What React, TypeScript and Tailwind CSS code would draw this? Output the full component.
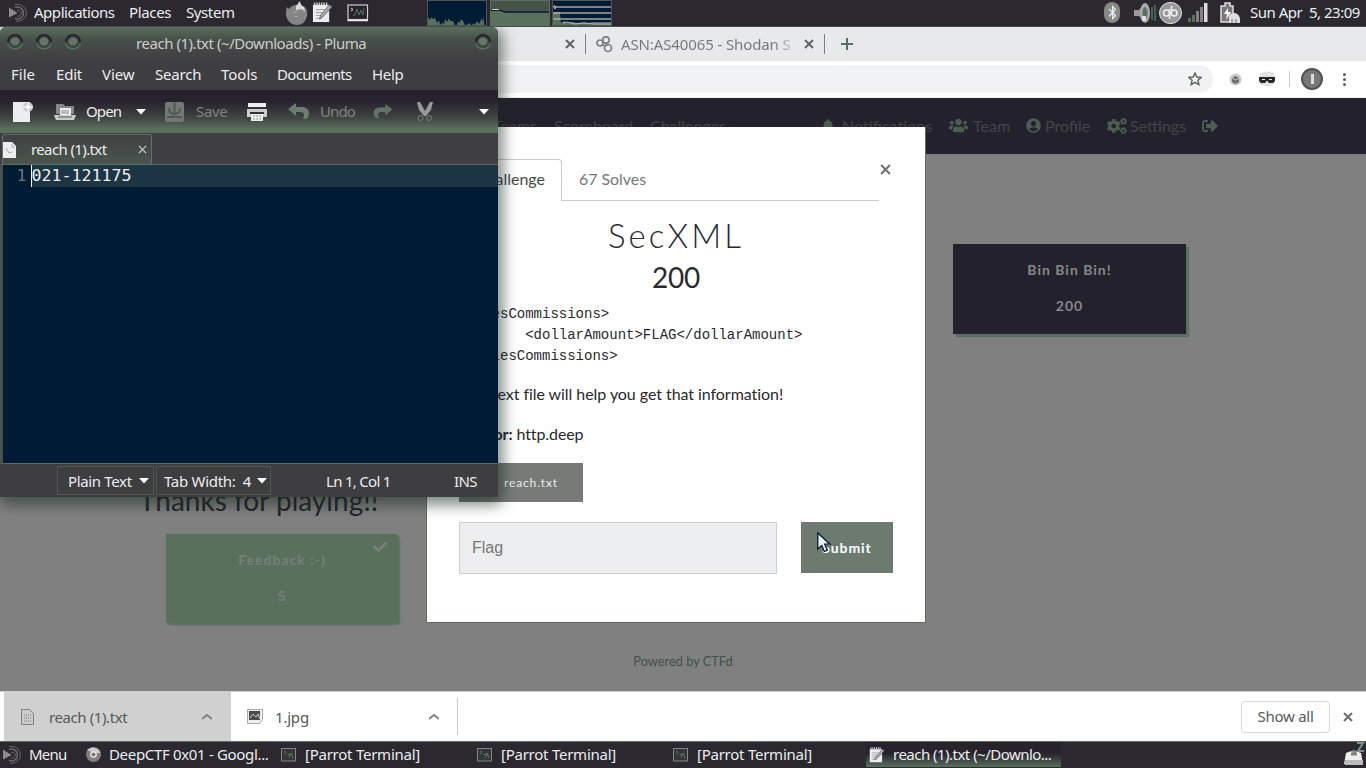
import React from "react";
import { FaBell, FaUsers, FaUserCircle, FaCogs, FaSignOutAlt, FaCheck, FaDownload, FaBluetoothB } from "react-icons/fa";

const ui = "font-['Noto_Sans',sans-serif]";

function ParrotLogo() {
  return (
    <svg width="20" height="20" viewBox="0 0 20 20" className="shrink-0">
      <path d="M1 4.5 9.5 10 1 14.5z" fill="#8c8c8c" />
      <path d="M7 4.5A6 6 0 1 1 7 15.5" fill="none" stroke="#777" strokeWidth="1.2" />
      <path d="M7 1.5A9 9 0 0 1 18 13Q15 18 8 18.5" fill="none" stroke="#666" strokeWidth="1" />
      <path d="M9 7.5A3 3 0 1 1 9 13" fill="none" stroke="#666" strokeWidth="1" />
    </svg>
  );
}

function Terminal({ dim = false }: { dim?: boolean }) {
  return dim ? (
    <svg width="15" height="14" viewBox="0 0 15 14" className="shrink-0">
      <rect x=".5" y=".5" width="14" height="12.5" fill="#333735" stroke="#858585" />
      <path d="M3 3l2 1.5L3 6M6.500 6.500h2M8 10l2-5 2 5" fill="none" stroke="#667568" />
    </svg>
  ) : (
    <svg width="22" height="18" viewBox="0 0 22 18" className="shrink-0">
      <rect x="1" y="1" width="19.500" height="14.500" fill="#27222c" stroke="#cdcdcd" strokeWidth="1.2" />
      <path d="M.5 16.500h20.500" stroke="#eee" strokeWidth="1.500" />
      <path d="M4 4l2 1.500L4 7" fill="none" stroke="#ddd" />
      <path d="M6 12l2-1 2-6 2 6 2-5 2 5 1-7" fill="none" stroke="#58705c" />
    </svg>
  );
}

function Notepad({ size }: { size: number }) {
  return (
    <svg width={size} height={size} viewBox="0 0 22 22" className="shrink-0">
      <path d="M1 3h17v18H1z" fill="#ecedef" />
      <path d="M2 2h15" stroke="#ccc" strokeWidth="3" strokeDasharray="1.500 1" />
      <path d="M4 8h9M4 11h7M4 14h6M4 17h5" stroke="#999" />
      <path d="M8 18l1-4L18 3l3 2-10 11z" fill="#aaa" stroke="#555" strokeWidth=".8" />
    </svg>
  );
}

function Firefox() {
  return (
    <svg width="24" height="24" viewBox="0 0 24 24">
      <path d="M2 6l2 2q3-4 7-4 2-1 3-4l3 5 3 1q3 4 2 9-2 9-10 9T1 15q-.5-5 1-9z" fill="#858585" />
      <path d="M11 5q3-2 4-5 0 4 4 6l1 5-3-3-6 1z" fill="#ddd" />
      <path d="M8 12l4-2M9 15l4 1" stroke="#aaa" />
    </svg>
  );
}

function Graph1() {
  return (
    <svg width="60" height="26" viewBox="0 0 60 26">
      <rect width="60" height="26" fill="#001b35" />
      <path d="M0 26V19l1-2 2 3 1-3 2 2 2-1 2 5 2-3 1 5 2-2 2 1 1-5 2 3 2-4 1 3 3 0 2 5 2-1 1-4 2 2 1-4 2 2 2 5 3-2 2-1 1 3 3-3 1 2 2-4 2 3 1-2 2-4 1 4 1-6v11z" fill="#58705c" />
      <rect x=".5" y=".5" width="59" height="25" fill="none" stroke="#4c5650" />
    </svg>
  );
}
function Graph2() {
  return (
    <svg width="60" height="26" viewBox="0 0 60 26">
      <rect width="60" height="26" fill="#48534b" />
      <path d="M0 26V11h9l7 1h44v14z" fill="#58705c" />
      <path d="M0 10h9l6 2h45" fill="none" stroke="#001b35" strokeWidth="1.300" />
      <path d="M2 9.500h7" stroke="#ccc" />
      <rect x=".5" y=".5" width="59" height="25" fill="none" stroke="#58705c" />
    </svg>
  );
}
function Graph3() {
  return (
    <svg width="60" height="26" viewBox="0 0 60 26">
      <rect width="60" height="26" fill="#001b35" />
      <path d="M1 25V13l4-1 3 2 1 9 3-2 3 2 6-1 5 1 6-1 4 1 5-1h18v3z" fill="#58705c" />
      <path d="M1 7h58M1 13h58M1 19h58" stroke="#808080" strokeWidth="2" />
      <path d="M2 5l2 3-2 1M2 13h6M2 19h6M11 23l4-1 8 2 9-1 10 1h17" fill="none" stroke="#bbb" />
      <rect x=".5" y=".5" width="59" height="25" fill="none" stroke="#4c5650" />
    </svg>
  );
}

function TopPanel() {
  return (
    <header className={`flex h-[27px] shrink-0 items-center overflow-hidden border-b border-[#4c4a50] bg-[#2b2830] pb-px text-[15px] text-[#ecedef] ${ui}`}>
      <div className="w-[34px] shrink-0 pl-2"><ParrotLogo /></div>
      <div className="w-[95px] shrink-0 whitespace-nowrap tracking-[-0.47px]">Applications</div>
      <div className="w-[57px] shrink-0 whitespace-nowrap tracking-[-0.35px]">Places</div>
      <div className="w-[99px] shrink-0 whitespace-nowrap tracking-[-0.4px]">System</div>
      <div className="w-[27px] shrink-0"><Firefox /></div>
      <div className="w-[35px] shrink-0"><Notepad size={21} /></div>
      <div className="w-[80px] shrink-0"><Terminal /></div>
      <div className="flex w-[185px] shrink-0 gap-[2.5px] self-start"><Graph1 /><Graph2 /><Graph3 /></div>
      <div className="flex flex-1 items-center justify-end pr-[4px]">
        <span className="flex h-[21px] w-[16px] items-center justify-center rounded-full bg-[#858985]"><FaBluetoothB size={15} /></span>
        <svg width="24" height="22" viewBox="0 0 24 22" className="ml-[13px]">
          <path d="M1 8h5l5-6v18l-5-6H1z" fill="#999" />
          <ellipse cx="12" cy="11" rx="5" ry="10" fill="#aaa" /><ellipse cx="12" cy="11" rx="2.500" ry="6" fill="#58705c" />
          <path d="M9 14h4v5h-4z" fill="#ddd" /><path d="M19 5v13M22 3v16" stroke="#58705c" strokeWidth="1.500" />
        </svg>
        <span className="ml-[2px] flex h-[22px] w-[23px] items-center justify-center rounded-full border border-[#ddd] bg-[#999]">
          <svg width="19" height="16" viewBox="0 0 19 16" fill="none" stroke="#eee" strokeWidth="1.500"><circle cx="5.500" cy="8" r="3" /><circle cx="13" cy="8" r="3" /><path d="M8.500 4v10M10.500 1v10" /></svg>
        </span>
        <svg width="21" height="21" viewBox="0 0 21 21" className="ml-[5px]">
          <path d="M1 16h3v4H1zM5 13h3v7H5z" fill="#58705c" /><path d="M9 9h3v11H9zM13 5h3v15h-3z" fill="#808080" /><path d="M17 1h3.500v19H17z" fill="#ddd" />
        </svg>
        <svg width="22" height="22" viewBox="0 0 22 22" className="ml-[11px]">
          <path d="M2 4h4V1h5v3h3v16H2z" fill="#777" stroke="#ddd" strokeWidth="1.500" />
          <path d="M9 6l-4 6h3l-1 6 5-8H9z" fill="#fff" />
          <path d="M10 21v-7q1-3 5-3t6 5v5z" fill="#ddd" /><path d="M13 21v-4M17 21v-4" stroke="#777" />
        </svg>
        <span className="ml-[9px] w-[112px] whitespace-pre tracking-[-0.5px]">Sun Apr  5, 23:09</span>
      </div>
    </header>
  );
}

function Cross({ className = "", size = 10, w = 2 }: { className?: string; size?: number; w?: number }) {
  return (
    <svg width={size} height={size} viewBox="0 0 10 10" className={`shrink-0 ${className}`} stroke="currentColor" strokeWidth={w} fill="none">
      <path d="M1 1l8 8M9 1l-8 8" />
    </svg>
  );
}

function Chrome() {
  return (
    <>
      <div className={`flex h-[34px] shrink-0 items-center bg-[#e8e9eb] pl-[565px] text-[16px] text-[#747874] ${ui}`}>
        <Cross className="text-[#606461]" />
        <div className="ml-[10px] h-[20px] w-px bg-[#808080]" />
        <svg width="18" height="17" viewBox="0 0 18 17" className="ml-[10px]" fill="none" stroke="#808080" strokeWidth="1.700">
          <circle cx="4" cy="7" r="3" /><circle cx="10" cy="4" r="3.200" /><circle cx="12" cy="12" r="3.500" /><path d="M6 9l4 1M10 7l1 3" />
        </svg>
        <div className="ml-[7px] w-[183px] overflow-hidden whitespace-nowrap bg-gradient-to-r from-[#747874] from-[84%] to-[#e8e9eb] to-[97%] bg-clip-text text-[15px] tracking-[-0.12px] text-transparent">ASN:AS40065 - Shodan S</div>
        <Cross className="text-[#606461]" />
        <div className="ml-[10px] h-[20px] w-px bg-[#808080]" />
        <svg width="12" height="12" viewBox="0 0 12 12" className="ml-[16px]"><path d="M6 0v12M0 6h12" stroke="#58705c" strokeWidth="2" /></svg>
      </div>
      <div className="flex h-[36px] shrink-0 items-center bg-white">
        <div className="flex h-[28px] w-[1213px] items-center justify-end rounded-r-full bg-[#f1f2f3] pr-[11px]">
          <svg width="14" height="14" viewBox="0 0 14 14"><path d="M7 1l1.800 4 4.400.4-3.300 2.900 1 4.300L7 10.300l-3.900 2.300 1-4.300L.8 5.400l4.400-.4z" fill="none" stroke="#58625b" strokeWidth="1.400" /></svg>
        </div>
        <svg width="13" height="13" viewBox="0 0 13 13" className="ml-[16px]"><circle cx="6.500" cy="6.500" r="6" fill="#ccc" /><path d="M3 5l3.500-2L10 5v4l-3.500 2L3 9z" fill="#667069" /><path d="M3 5l3.500 2L10 5" fill="none" stroke="#ccc" /></svg>
        <svg width="16" height="16" viewBox="0 0 16 16" className="ml-[17px]"><path d="M1 2q7-3 14 0v11q-7 5-14 0z" fill="#e2e2e2" /><path d="M0 6h16v4l-2 2h-4L8 9.500 6 12H2l-2-2z" fill="#27222c" /><path d="M3 8.500h3M10 8.500h3" stroke="#eee" /></svg>
        <div className="ml-[14px] h-[16px] w-px bg-[#ccc]" />
        <div className="ml-[11px] flex h-[22px] w-[22px] items-center justify-center rounded-full border-2 border-[#505250] bg-[#777]"><span className="h-[10px] w-[3px] bg-[#ddd]" /></div>
        <div className="ml-[20px] flex flex-col gap-[2px]"><i className="h-[3px] w-[3px] rounded-full bg-[#58625b]" /><i className="h-[3px] w-[3px] rounded-full bg-[#58625b]" /><i className="h-[3px] w-[3px] rounded-full bg-[#58625b]" /></div>
      </div>
    </>
  );
}

function Site() {
  return (
    <main className="flex h-[594px] shrink-0 flex-col border-t border-[#ecedef] bg-[#808080] font-['Lato',sans-serif]">
      <nav className="flex h-[56px] shrink-0 items-center bg-[#24212e] pb-px pl-[493px] text-[16px] whitespace-nowrap text-[#424544]">
        <div className="w-[61px]">Teams</div>
        <div className="w-[96px] tracking-[-0.05px]">Scoreboard</div>
        <div className="w-[171px]">Challenges</div>
        <FaBell size={14} className="text-[#4d5d52]" /><div className="ml-[7px] w-[107px]">Notifications</div>
        <FaUsers size={19} className="text-[#4d5d52]" /><div className="ml-[5px] w-[53px]">Team</div>
        <FaUserCircle size={15} className="text-[#4d5d52]" /><div className="ml-[4px] w-[62px]">Profile</div>
        <FaCogs size={20} className="text-[#4d5d52]" /><div className="ml-[3px] w-[72px]">Settings</div>
        <FaSignOutAlt size={16} className="text-[#4d5d52]" />
      </nav>
      <section className="flex h-[229px] shrink-0 justify-end pt-[90px] pr-[180px] pb-[49px]">
        <div className="flex w-[233px] flex-col items-center gap-[18px] bg-[#24212e] pt-[17px] text-[14px] leading-[18px] font-bold tracking-[1px] text-[#858985] shadow-[3px_3px_1px_#5c6e60]">
          <span>Bin Bin Bin!</span><span>200</span>
        </div>
      </section>
      <section className="flex h-[252px] shrink-0 flex-col pt-[95px] pl-[139px]">
        <h2 className="h-[56px] text-[28px] leading-[44px] text-[#24222e]">Thanks for playing!!</h2>
        <div className="ml-[27px] flex h-[89px] w-[232px] flex-col items-center gap-[18px] rounded-r-[3px] bg-[#58705c] pt-[17px] text-[14px] leading-[18px] font-bold tracking-[1px] text-[#7a7f7b] shadow-[2px_2px_2px_#58705c]">
          <div className="flex w-full justify-center"><FaCheck size={14} className="order-2 -mt-[11px] -mr-[61px] ml-[47px]" /><span>Feedback :-)</span></div><span>5</span>
        </div>
      </section>
      <footer className="pt-[17px] text-center text-[12.8px] leading-[18px] text-[#405044]">Powered by CTFd</footer>
    </main>
  );
}

function Downloads() {
  return (
    <div className={`flex h-[51px] shrink-0 items-center border-t border-[#ccc] border-b border-b-[#58705c] bg-white text-[15px] text-[#555956] ${ui}`}>
      <div className="ml-[4px] flex h-full w-[227px] items-center bg-[#d0d0d0] pt-px pl-[17px]">
        <svg width="13" height="16" viewBox="0 0 13 16"><path d="M.5.5h8l4 4v11H.5z" fill="#ccc" stroke="#808080" /><path d="M3 6h7M3 9h7M3 12h7" stroke="#808080" strokeDasharray="1 1" /></svg>
        <span className="ml-[15px] w-[153px] pt-px tracking-[-0.4px]">reach (1).txt</span>
        <svg width="10" height="6"><path d="M0 5l5-4 5 4" fill="none" stroke="#808080" strokeWidth="2" /></svg>
      </div>
      <svg width="16" height="15" viewBox="0 0 16 15" className="ml-[16px]"><path d="M.5.5h15v10l-3 4H.5z" fill="#eee" stroke="#aaa" /><path d="M2 2h11v9H2z" fill="#4b4b4b" /><path d="M3 9l3-4 3 3 2-3 2 5" fill="none" stroke="#ccc" /></svg>
      <span className="ml-[12px] w-[154px] pt-[2px] tracking-[-0.2px]">1.jpg</span>
      <svg width="10" height="6"><path d="M0 5l5-4 5 4" fill="none" stroke="#808080" strokeWidth="2" /></svg>
      <div className="ml-[18px] h-[37px] w-px bg-[#ccc]" />
      <div className="ml-auto flex h-[32px] w-[89px] items-center justify-center rounded-[4px] border border-[#d8d8d8]"><span className="tracking-[-0.25px]">Show all</span></div>
      <Cross className="mr-[13px] ml-[13px] text-[#6d706e]" size={10} />
    </div>
  );
}

function Taskbar() {
  return (
    <footer className={`flex h-[26px] shrink-0 items-center overflow-hidden bg-[#2b2830] pb-px text-[15px] whitespace-nowrap text-[#ecedef] ${ui}`}>
      <div className="w-[29px] shrink-0 pl-[2px]"><ParrotLogo /></div>
      <span className="w-[57px] shrink-0 tracking-[-0.8px]">Menu</span>
      <svg width="15" height="15" viewBox="0 0 15 15" className="shrink-0"><circle cx="7.500" cy="7.500" r="7.500" fill="#808080" /><path d="M1 3q6-5 12 0l1 3H8z" fill="#ccc" /><circle cx="7.500" cy="7.500" r="3.300" fill="#ecedef" /><circle cx="7.500" cy="7.500" r="2" fill="#777" /></svg>
      <span className="ml-[8px] w-[172px] shrink-0 tracking-[-0.33px]">DeepCTF 0x01 - Googl...</span>
      <Terminal dim /><span className="ml-[9px] w-[172px] shrink-0 tracking-[-0.25px]">[Parrot Terminal]</span>
      <Terminal dim /><span className="ml-[9px] w-[172px] shrink-0 tracking-[-0.25px]">[Parrot Terminal]</span>
      <Terminal dim /><span className="ml-[9px] w-[169px] shrink-0 tracking-[-0.25px]">[Parrot Terminal]</span>
      <div className="flex h-[25px] w-[195px] shrink-0 items-center bg-gradient-to-b from-[#27222c] from-45% to-[#58705c] pl-[3px]"><Notepad size={16} /><span className="ml-[8px] tracking-[-0.52px]">reach (1).txt (~/Downlo...</span></div>
      <svg width="22" height="25" viewBox="0 0 22 25" className="mr-px ml-auto shrink-0"><path d="M1 22l2-11q8-4 15 0l2 11z" fill="#eee" /><path d="M2 18h18v5H2z" fill="#bbb" /><path d="M11 8v5M8 12h6" stroke="#808080" strokeWidth="3" /><path d="M14 1h6l-5 8h6" fill="none" stroke="#7b8e91" strokeWidth="2" /></svg>
    </footer>
  );
}

function Modal() {
  return (
    <div className="absolute top-[127px] left-[426px] flex h-[496px] w-[500px] flex-col border border-t-0 border-[#58705c] bg-white pr-[32px] pl-[32px] font-['Lato',sans-serif] text-[16px] text-[#2b282f]">
      <div className="flex h-[74px] items-end">
        <div className="flex h-[42px] w-[103px] items-center justify-end rounded-tr-[4px] border-t border-r border-[#ccc] pr-[16px] pb-[3px] text-[#454947]">Challenge</div>
        <div className="flex h-[42px] w-[317px] items-center border-b border-[#ccc] pb-[2px] pl-[17px] text-[15.9px] text-[#747774]">67 Solves</div>
        <Cross className="-mt-[2px] mb-[26px] ml-px text-[#727272]" size={11} w={1.9} />
      </div>
      <h1 className="mt-[13px] text-center text-[33px] leading-[42px] font-light tracking-[3.1px]">SecXML</h1>
      <h2 className="text-center text-[28px] leading-[42px] tracking-[-0.2px]">200</h2>
      <pre className="mt-[6px] -ml-px font-['Liberation_Mono',monospace] text-[14px] leading-[21px]">{"<salesCommissions>\n        <dollarAmount>FLAG</dollarAmount>\n</salesCommissions>"}</pre>
      <p className="mt-[15px] leading-[24px] tracking-[-0.055px] whitespace-nowrap">This text file will help you get that information!</p>
      <p className="mt-[16px] leading-[24px] tracking-[-0.1px]"><b>Author:</b> http.deep</p>
      <div className="mt-[17px] flex h-[39px] w-[124px] shrink-0 items-center justify-center gap-[8px] bg-[#777b78] text-[12px] tracking-[0.85px] text-[#ecedef]"><FaDownload size={12} />reach.txt</div>
      <div className="mt-[20px] flex justify-between">
        <div className="flex h-[52px] w-[318px] items-center border border-[#ccc] bg-[#edeef0] pl-[12px] font-['Liberation_Sans',sans-serif] text-[16px] text-[#777]">Flag</div>
        <div className="flex h-[51px] w-[92px] items-center justify-center bg-[#6c7a6f] pb-px text-[14px] font-bold tracking-[0.9px] text-white">Submit</div>
      </div>
    </div>
  );
}

function WinButton() {
  return <svg width="18" height="20" viewBox="0 0 18 20"><circle cx="9" cy="9" r="7" fill="#3e4541" /><path d="M2 9A7 7 0 0 1 16 9" fill="none" stroke="#27222c" strokeWidth="2.200" /><path d="M2 11A7.500 7.500 0 0 0 16 11" fill="none" stroke="#58705c" strokeWidth="1.500" /><ellipse cx="9" cy="8.500" rx="4.500" ry="4" fill="#65756a" /></svg>;
}
function Down() { return <svg width="10" height="6" className="shrink-0"><path d="M0 0h10L5 5.500z" fill="white" /></svg>; }

function Pluma() {
  return (
    <div className={`absolute top-[27px] left-0 flex h-[470px] w-[498px] flex-col overflow-hidden rounded-t-[6px] bg-[#404042] text-[15px] whitespace-nowrap text-[#ecedef] ${ui}`}>
      <div className="flex h-[32px] shrink-0 items-center bg-gradient-to-b from-[#58705c] via-[#484f4a] via-40% to-[#404042] pl-[6px]">
        <div className="flex w-[130px] gap-[11px]"><WinButton /><WinButton /><WinButton /></div>
        <span className="w-[338px] tracking-[-0.46px] text-[#ccc]">reach (1).txt (~/Downloads) - Pluma</span><WinButton />
      </div>
      <div className="flex h-[31px] shrink-0 items-center bg-[#3e3d41] pl-[11px]">
        <span className="w-[45px]">File</span><span className="w-[46px] tracking-[-0.2px]">Edit</span><span className="w-[53px] tracking-[-0.1px]">View</span><span className="w-[66px] tracking-[-0.2px]">Search</span><span className="w-[56px]">Tools</span><span className="w-[95px] tracking-[-0.7px]">Documents</span><span className="tracking-[-0.3px]">Help</span>
      </div>
      <div className="flex h-[43px] shrink-0 items-center bg-gradient-to-b from-[#27222c] from-25% via-[#404542] via-65% to-[#58705c] to-90% pl-[13px]">
        <svg width="21" height="21" viewBox="0 0 21 21" className="shrink-0"><path d="M0 1h17v20H0z" fill="#ecedef" /><circle cx="15" cy="6" r="5" fill="#ccc" /><path d="M15 1v10M10 6h10" stroke="#fff" /><circle cx="15" cy="6" r="2" fill="#fff" /></svg>
        <svg width="22" height="18" viewBox="0 0 22 18" className="ml-[20px] shrink-0"><path d="M2 1h7l2 2h9v8H2z" fill="#858985" /><path d="M6 5h11v8H6z" fill="#eee" /><path d="M7 8h8M7 10h8" stroke="#888" /><path d="M0 12h22l-2 5H2z" fill="#ccc" /><path d="M4 14h14" stroke="#555" /></svg>
        <span className="ml-[10px] w-[50px] shrink-0 tracking-[-0.9px]">Open</span><Down />
        <svg width="19" height="21" viewBox="0 0 19 21" className="ml-[19px] shrink-0"><rect width="19" height="20" rx="2" y="1" fill="#747875" /><path d="M9.500 1v13M4 7q0 6 5.500 6T15 7" fill="none" stroke="#4c5a50" strokeWidth="2" /><path d="M2 16h15" stroke="#555" strokeWidth="2" /></svg>
        <span className="ml-[12px] w-[51px] shrink-0 tracking-[-0.3px] text-[#808380]">Save</span>
        <svg width="20" height="19" viewBox="0 0 20 19" className="shrink-0"><path d="M1 1h18v4H1z" fill="#eee" /><path d="M0 7h20v8H0z" fill="#ccc" /><path d="M3 6h14M3 11h14" stroke="#333" strokeWidth="2" /><path d="M4 12h12v7H4z" fill="#ecedef" /><path d="M6 14h8M6 17h8" stroke="#999" strokeDasharray="2 1" /></svg>
        <svg width="21" height="17" viewBox="0 0 21 17" className="ml-[21px] shrink-0"><path d="M0 6l8-6v4h7q6 1 6 6t-3 6h-3q3-6-2-7H8v4z" fill="#6d7b70" /></svg>
        <span className="ml-[11px] w-[53px] shrink-0 tracking-[-0.9px] text-[#808380]">Undo</span>
        <svg width="20" height="15" viewBox="0 0 21 17" className="shrink-0"><path d="M21 6l-8-6v4H6Q0 5 0 10t3 6h3Q3 10 8 9h5v4z" fill="#617366" /></svg>
        <svg width="16" height="21" viewBox="0 0 16 21" className="ml-[24px] shrink-0"><path d="M0 1h3l5 9 5-9h3l-2 8-5 6H7L2 9z" fill="#999" /><circle cx="3.500" cy="17" r="2.500" fill="none" stroke="#808080" /><circle cx="12" cy="17" r="2.500" fill="none" stroke="#808080" /></svg>
        <div className="mr-[9px] ml-auto"><Down /></div>
      </div>
      <div className="flex h-[31px] shrink-0 items-end bg-[#3f3e42] pl-[2px]">
        <div className="flex h-[30px] w-[150px] items-center rounded-t-[3px] border border-b-0 border-[#657067] bg-gradient-to-b from-[#404042] to-[#4a554d]">
          <svg width="13" height="16" viewBox="0 0 13 16"><path d="M0 0h9l4 4v12H0z" fill="#ecedef" /><path d="M3 6l3 5 3-1M9 2v3h3" fill="none" stroke="#aaa" /></svg>
          <span className="ml-[15px] w-[107px] tracking-[-0.62px]">reach (1).txt</span><Cross size={9} w={1.4} className="text-[#ccc]" />
        </div>
      </div>
      <div className="flex h-[300px] shrink-0 flex-col border-y border-l-[3px] border-[#58705c] border-l-[#46524a] bg-[#001b35]">
        <div className="flex h-[22px] items-center font-['DejaVu_Sans_Mono',monospace] text-[16.6px]">
          <span className="w-[27.500px] pr-[4px] text-right text-[#68796c]">1</span><span className="flex h-full flex-1 items-center border-l border-white bg-[#1c3544] pt-px">021-121175</span>
        </div>
      </div>
      <div className="flex flex-1 items-center bg-[#3e3d40] pl-[57px]">
        <div className="flex h-[29px] w-[97px] items-center justify-between border border-[#4d5a50] pr-[4px] pl-[10px]"><span className="leading-[20px] tracking-[-0.35px]">Plain Text</span><Down /></div>
        <div className="ml-[2px] flex h-[29px] w-[115px] items-center justify-between border border-[#4d5a50] pr-[3px] pl-[7px]"><span className="leading-[20px] tracking-[-0.3px]">Tab Width:&nbsp; 4</span><Down /></div>
        <span className="ml-[55px] w-[128px] leading-[20px] tracking-[-0.7px]">Ln 1, Col 1</span><span className="leading-[20px] tracking-[-0.6px]">INS</span>
      </div>
    </div>
  );
}

export default function App() {
  return (
    <div className="relative flex h-[768px] w-[1366px] flex-col overflow-hidden">
      <TopPanel />
      <Chrome />
      <Site />
      <Downloads />
      <Taskbar />
      <Modal />
      <div className="absolute top-[27px] left-0 h-[714px] w-[560px] overflow-hidden"><div className="h-[470px] w-[498px] rounded-[6px] shadow-[2px_5px_14px_3px_rgba(25,40,30,0.55)]" /></div>
      <Pluma />
      <svg width="14" height="21" viewBox="0 0 14 21" className="absolute top-[532px] left-[817px]"><path d="M.8 1v16l4-3.500 2.500 6 3-1.300-2.600-6H13z" fill="#ecedef" stroke="#001b35" strokeWidth="1.300" /></svg>
    </div>
  );
}
